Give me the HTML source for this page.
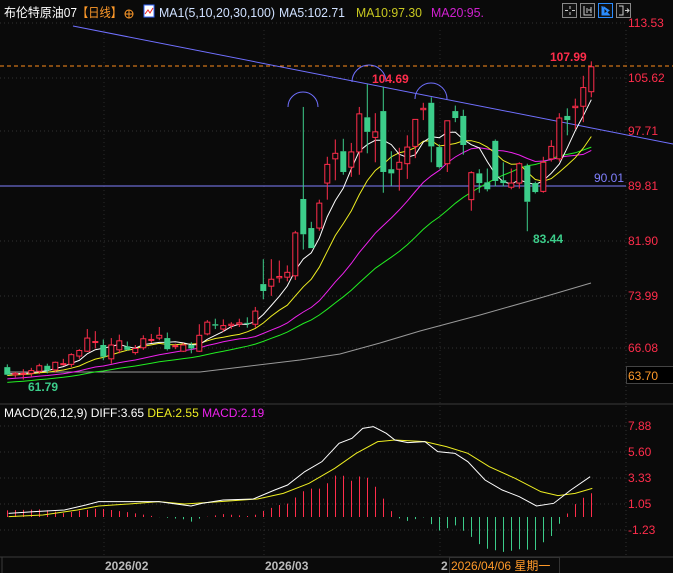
<!DOCTYPE html>
<html><head><meta charset="utf-8"><style>
html,body{margin:0;padding:0;background:#0a0a0a;width:673px;height:573px;overflow:hidden}
svg{display:block}
text{font-family:"Liberation Sans","Noto Sans CJK SC",sans-serif}
</style></head><body>
<svg id="s" width="673" height="573" xmlns="http://www.w3.org/2000/svg"></svg>
<script>
var D=[[63.8,64.2,62.6,62.7],[62.7,63.1,62.3,62.9],[62.8,63.5,62.0,62.9],[62.9,63.7,62.4,63.3],[63.2,64.3,62.8,64.0],[64.0,64.3,62.9,63.3],[63.4,64.6,63.0,64.5],[64.3,65.0,64.0,64.3],[64.2,65.8,63.8,65.6],[65.4,66.4,65.0,66.2],[66.1,69.3,66.0,68.0],[67.5,69.0,66.5,67.5],[67.0,67.8,64.8,65.3],[65.0,68.0,64.3,67.0],[66.3,68.5,65.8,67.6],[66.8,67.5,66.2,66.3],[65.9,67.0,65.6,66.5],[66.6,68.4,66.3,67.9],[67.7,68.6,67.3,67.8],[68.0,69.6,67.7,68.4],[68.0,68.8,66.2,66.4],[66.8,67.2,66.4,66.9],[66.1,67.3,66.0,67.0],[67.0,67.4,65.8,66.5],[66.1,70.0,66.0,68.4],[68.6,70.6,68.4,70.3],[70.0,70.8,69.3,69.8],[69.3,70.7,68.9,69.8],[69.8,70.3,69.3,70.0],[70.0,70.8,69.6,70.2],[70.2,71.0,69.5,70.1],[70.0,72.5,69.5,71.9],[75.8,79.4,73.6,74.8],[75.5,79.4,74.1,76.5],[76.7,79.2,76.0,76.9],[76.8,78.5,76.2,77.5],[77.0,83.5,76.4,83.2],[88.1,101.4,80.8,83.0],[83.9,84.8,81.0,81.0],[83.9,88.0,83.5,87.5],[90.4,94.2,88.0,93.1],[93.9,96.7,90.8,94.7],[95.0,96.8,91.6,92.0],[92.7,96.2,91.3,94.9],[94.9,101.4,91.6,100.4],[99.9,104.69,94.7,97.8],[97.0,100.5,93.4,97.8],[100.8,104.3,89.0,92.0],[92.4,95.0,90.0,91.8],[92.4,95.5,89.3,93.4],[93.2,97.3,91.0,95.6],[95.7,98.5,94.0,99.6],[101.0,102.0,99.5,101.2],[102.0,102.8,93.4,95.7],[95.6,96.0,92.5,92.7],[93.2,98.5,92.0,99.4],[100.8,101.6,99.2,99.8],[100.1,101.0,94.5,95.9],[88.0,92.1,86.4,91.9],[91.8,92.4,89.0,90.4],[90.5,92.5,89.2,89.5],[96.5,96.7,89.9,90.7],[90.8,93.4,89.9,90.4],[89.8,92.5,89.5,90.4],[90.4,93.4,89.6,93.2],[92.9,93.2,83.44,87.7],[90.4,90.6,88.9,89.1],[89.2,94.2,89.0,93.4],[93.9,96.6,93.5,95.7],[93.9,100.5,93.5,99.8],[100.1,101.2,97.3,99.5],[101.3,102.6,98.2,101.5],[101.5,105.9,99.2,104.2],[103.6,107.99,102.8,107.2]];
function Y(p){return 23+(113.53-p)*6.92}
function X(i){return 7.3+8*i}
var R='#ff2d4b',G='#3ccd8a',h='';
[23,78,131,186,241,296,348].forEach(function(y){h+='<line x1="0" y1="'+y+'" x2="626" y2="'+y+'" stroke="#333" stroke-dasharray="1,3"/>'});
[426,452,478,504,530].forEach(function(y){h+='<line x1="0" y1="'+y+'" x2="626" y2="'+y+'" stroke="#333" stroke-dasharray="1,3"/>'});
[104,264,440].forEach(function(x){h+='<line x1="'+x+'" y1="30" x2="'+x+'" y2="557" stroke="#2a2a2a" stroke-dasharray="1,3"/>'});
h+='<line x1="626" y1="30" x2="626" y2="557" stroke="#333" stroke-dasharray="1,3"/>';
h+='<line x1="0" y1="404" x2="673" y2="404" stroke="#3a3a3a"/>';
h+='<line x1="0" y1="557" x2="673" y2="557" stroke="#3a3a3a"/>';
h+='<line x1="2" y1="557" x2="2" y2="573" stroke="#3a3a3a"/>';
h+='<line x1="0" y1="66" x2="673" y2="66" stroke="#ff8c1a" stroke-dasharray="4,3"/>';
h+='<line x1="0" y1="186" x2="626" y2="186" stroke="#8080ff"/>';
h+='<line x1="73" y1="26" x2="673" y2="144" stroke="#7070ff"/>';
h+='<path d="M288 107 A15 15 0 0 1 318 107" fill="none" stroke="#7070ff"/>';
h+='<path d="M352 82 A17 17 0 0 1 386 82" fill="none" stroke="#7070ff"/>';
h+='<path d="M415 99 A16 16 0 0 1 447 99" fill="none" stroke="#7070ff"/>';
var closes=[];for(var k=0;k<30;k++)closes.push(60+3*k/29);
D.forEach(function(d){closes.push(d[3])});
function ma(n,c){var p='';for(var i=0;i<D.length;i++){var s=0;for(var j=0;j<n;j++)s+=closes[30+i-j];p+=X(i).toFixed(1)+','+Y(s/n).toFixed(1)+' ';}return '<polyline points="'+p+'" fill="none" stroke="'+c+'" stroke-width="1"/>';}
h+='<polyline points="7,372 200,372 250,366 300,360 340,354 380,343 420,331 480,315 540,298 591,283" fill="none" stroke="#999"/>';
h+=ma(30,'#22ee22')+ma(20,'#ee22ee')+ma(10,'#eeee22')+ma(5,'#ffffff');
D.forEach(function(d,i){var x=X(i),o=Y(d[0]),hi=Y(d[1]),lo=Y(d[2]),c=Y(d[3]);var up=d[3]>=d[0];var col=up?R:G;var t=Math.min(o,c),b=Math.max(o,c);if(b-t<1)b=t+1;
h+='<line x1="'+x+'" y1="'+hi+'" x2="'+x+'" y2="'+t+'" stroke="'+col+'"/><line x1="'+x+'" y1="'+b+'" x2="'+x+'" y2="'+lo+'" stroke="'+col+'"/>';
if(up)h+='<rect x="'+(x-2.5)+'" y="'+t+'" width="5" height="'+(b-t)+'" fill="#0a0a0a" stroke="'+col+'"/>';
else h+='<rect x="'+(x-3)+'" y="'+t+'" width="6" height="'+(b-t)+'" fill="'+col+'"/>';});
h+='<text x="372" y="83" fill="'+R+'" font-size="12" font-weight="bold">104.69</text>';
h+='<text x="550" y="61" fill="'+R+'" font-size="12" font-weight="bold">107.99</text>';
h+='<text x="533" y="243" fill="'+G+'" font-size="12" font-weight="bold">83.44</text>';
h+='<text x="28" y="391" fill="'+G+'" font-size="12" font-weight="bold">61.79</text>';
h+='<text x="594" y="182" fill="#8080ff" font-size="12">90.01</text>';
[['113.53',23],['105.62',78],['97.71',131],['89.81',186],['81.90',241],['73.99',296],['66.08',348],['7.88',426],['5.60',452],['3.33',478],['1.05',504],['-1.23',530]].forEach(function(a){h+='<text x="628" y="'+(a[1]+4)+'" fill="'+R+'" font-size="12">'+a[0]+'</text>'});
h+='<rect x="626.5" y="366.5" width="47" height="17" fill="#000" stroke="#444"/><text x="628" y="380" fill="#ff9a2a" font-size="12">63.70</text>';
var SX=673/1568;
function pts(a){return a.map(function(p){return [p[0]*SX,400+p[1]/3]})}
var dif=pts([[20,340],[80,335],[150,330],[200,315],[230,305],[290,305],[370,305],[410,312],[445,318],[470,310],[520,300],[590,297],[640,270],[670,255],[710,215],[750,185],[790,130],[820,115],[845,85],[870,80],[900,100],[920,120],[950,128],[990,125],[1020,155],[1060,160],[1090,185],[1130,240],[1170,270],[1210,290],[1250,318],[1290,310],[1330,270],[1375,230]]);
var dea=pts([[20,350],[100,345],[180,330],[230,318],[300,312],[370,305],[430,312],[480,308],[600,297],[660,280],[720,250],[780,205],[830,160],[880,125],[920,120],[990,125],[1040,140],[1090,160],[1140,200],[1200,235],[1260,275],[1300,287],[1340,280],[1380,265]]);
function interp(a,x){if(x<=a[0][0])return a[0][1];for(var i=1;i<a.length;i++){if(x<=a[i][0]){var t=(x-a[i-1][0])/(a[i][0]-a[i-1][0]);return a[i-1][1]+t*(a[i][1]-a[i-1][1]);}}return a[a.length-1][1];}
for(var i=0;i<D.length;i++){var x=Math.round(X(i))+0.5;var v=(interp(dea,x)-interp(dif,x))*2;var z=517;h+='<line x1="'+x+'" y1="'+z+'" x2="'+x+'" y2="'+(z-v)+'" stroke="'+(v>=0?R:G)+'"/>';}
h+='<polyline points="'+dea.map(function(p){return p.join(',')}).join(' ')+'" fill="none" stroke="#eeee22"/>';
h+='<polyline points="'+dif.map(function(p){return p.join(',')}).join(' ')+'" fill="none" stroke="#fff"/>';
h+='<text x="4" y="417" font-size="12"><tspan fill="#fff">MACD(26,12,9) DIFF:3.65 </tspan><tspan fill="#eeee22">DEA:2.55 </tspan><tspan fill="#ee22ee">MACD:2.19</tspan></text>';
h+='<text x="105" y="570" fill="#bbb" font-size="12" font-weight="bold">2026/02</text>';
h+='<text x="265" y="570" fill="#bbb" font-size="12" font-weight="bold">2026/03</text>';
h+='<text x="441" y="570" fill="#bbb" font-size="12" font-weight="bold">2</text>';
h+='<rect x="449.5" y="557.5" width="110" height="16" fill="#0a0a0a" stroke="#333"/><text x="451" y="570" fill="#ff9a2a" font-size="12">2026/04/06 星期一</text>';
h+='<text x="4" y="17" font-size="12.5" fill="#fff" textLength="73" lengthAdjust="spacingAndGlyphs">布伦特原油07</text>';
h+='<text x="77" y="17" font-size="12.5" fill="#ff9a2a" textLength="45" lengthAdjust="spacingAndGlyphs">【日线】</text>';
h+='<circle cx="129" cy="14" r="4" fill="none" stroke="#ff9a2a"/><line x1="125" y1="14" x2="133" y2="14" stroke="#ff9a2a"/><line x1="129" y1="10" x2="129" y2="18" stroke="#ff9a2a"/>';
h+='<rect x="144" y="5" width="10" height="12" fill="#fff" stroke="#36f"/><polyline points="145,14 148,10 150,13 153,8" fill="none" stroke="#e22"/>';
h+='<text x="159" y="17" font-size="12.5" fill="#cfe0ff" textLength="116" lengthAdjust="spacingAndGlyphs">MA1(5,10,20,30,100)</text>';
h+='<text x="279" y="17" font-size="12.5" fill="#cfe0ff" textLength="66" lengthAdjust="spacingAndGlyphs">MA5:102.71</text>';
h+='<text x="356" y="17" font-size="12.5" fill="#c8c820" textLength="66" lengthAdjust="spacingAndGlyphs">MA10:97.30</text>';
h+='<text x="431" y="17" font-size="12.5" fill="#d020d0" textLength="53" lengthAdjust="spacingAndGlyphs">MA20:95.</text>';
[562,580,598,616].forEach(function(x,k){h+='<rect x="'+(x+.5)+'" y="3.5" width="14" height="14" fill="#111" stroke="'+(k==2?'#2a8cff':'#888')+'"/>';});
h+='<path d="M570 6v3M570 15v-3M565 10.5h3M575 10.5h-3" stroke="#ccc"/>';
h+='<path d="M584 6v9h8M587 8v5M591 7v6M588 10h3" stroke="#ccc" fill="none"/>';
h+='<path d="M602 6v9h8M604 7l5 3.5-5 3.5z" stroke="#2a8cff" fill="#2a8cff"/>';
h+='<path d="M619 6h4v9h-4M625 10.5h4M627 8.5l2 2-2 2" stroke="#ccc" fill="none"/>';
document.getElementById('s').innerHTML=h;
</script>
</body></html>
